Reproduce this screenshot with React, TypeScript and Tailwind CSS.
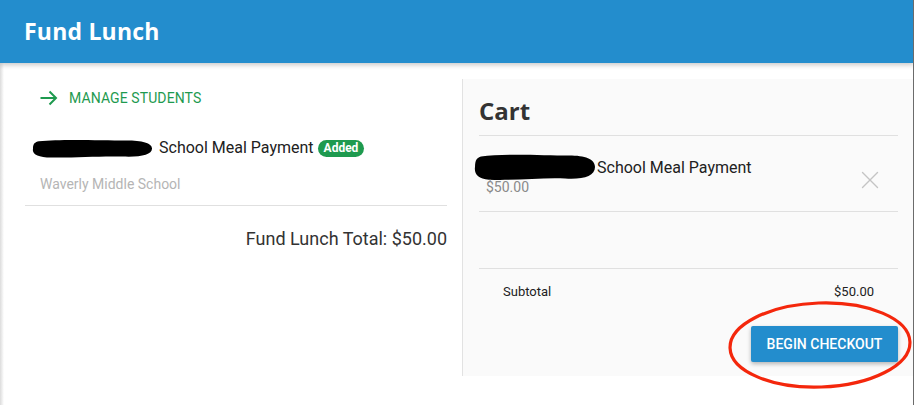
import { X } from 'lucide-react';

function Redaction({ className }: { className: string }) {
  return (
    <svg className={className} viewBox="0 0 124 26" preserveAspectRatio="none">
      <path d="M8 4 C30 1 70 3 96 3 C112 3 122 6 122 13 C122 21 110 24 92 23 C70 22 40 25 16 24 C5 23 1 19 2 13 C2 7 4 5 8 4 Z" fill="#000" />
    </svg>
  );
}

export default function App() {
  return (
    <div className="relative w-[914px] h-[405px] overflow-hidden bg-white font-['Roboto',sans-serif] text-[#212121]">
      <header className="relative z-10 h-[63px] bg-[#238dcd] px-6 flex items-center shadow-[0_2px_5px_rgba(0,0,0,0.22)]">
        <h1 className="text-white text-[23px] font-bold tracking-[0.2px] font-['Open_Sans',sans-serif] leading-none">Fund Lunch</h1>
      </header>

      <div className="absolute left-0 top-[63px] bottom-0 w-[4px] bg-gradient-to-r from-[#dcdcdc] to-transparent" />
      <div className="absolute right-0 top-0 bottom-0 w-[1px] bg-[#6b6b6b] z-20" />

      <div className="flex pt-[16px]">
        <section className="ml-[25px] w-[422px]">
          <a className="h-[38px] px-[15px] flex items-center gap-[11px] text-[14px] text-[#1e9a4f] uppercase tracking-[0.1px]">
            <svg className="w-[18px] h-[16px] shrink-0" viewBox="0 0 18 16" fill="none" stroke="currentColor" strokeWidth="2">
              <path d="M0.5 8h15.5M9.5 1.5l6.5 6.5-6.5 6.5" />
            </svg>
            Manage Students
          </a>

          <div className="pt-[19px] pb-[11px] border-b border-[#e0e0e0]">
            <div className="h-[24px] flex items-center pl-[6px]">
              <Redaction className="w-[123px] h-[21px] shrink-0" />
              <span className="ml-[5px] text-[16px]">School Meal Payment</span>
              <span className="ml-[4px] h-[17px] px-[6px] rounded-full bg-[#1e9a4f] text-white text-[12px] font-bold flex items-center leading-none">Added</span>
            </div>
            <div className="mt-[14px] h-[20px] px-[15px] flex items-center text-[14px] text-[#b5b5b5]">
              Waverly Middle School
            </div>
          </div>

          <div className="mt-[21px] text-right text-[18px] leading-[24px] text-[#333]">
            Fund Lunch Total: $50.00
          </div>
        </section>

        <aside className="ml-[15px] w-[452px] h-[297px] bg-[#fafafa] border-l border-[#e2e2e2] px-4 pt-[16px] pb-[14px] flex flex-col">
          <h2 className="text-[24px] leading-[32px] font-bold text-[#333] font-['Open_Sans',sans-serif] mb-[8px]">Cart</h2>

          <div className="border-t border-[#e0e0e0] pt-[20px] pb-[15px] flex items-end border-b">
            <div className="flex-1">
              <div className="h-[22px] flex items-center -ml-[6px]">
                <Redaction className="w-[124px] h-[30px] shrink-0" />
                <span className="text-[16px] mt-[2px]">School Meal Payment</span>
              </div>
              <div className="pl-[7px] h-[18px] flex items-center text-[14px] text-[#8a8a8a]">$50.00</div>
            </div>
            <X className="w-[30px] h-[30px] text-[#c4c4c4] mr-[13px] mb-[1px]" strokeWidth={1.1} />
          </div>

          <div className="h-[57px] border-b border-[#e0e0e0]" />

          <div className="mt-[14px] h-[18px] px-[24px] flex items-center justify-between text-[13px] text-[#212121]">
            <span>Subtotal</span>
            <span>$50.00</span>
          </div>

          <div className="mt-auto flex justify-end">
            <button className="w-[147px] h-[36px] rounded-[2px] bg-[#238dcd] text-white text-[14px] font-medium uppercase shadow-[0_2px_4px_rgba(0,0,0,0.28)]">
              Begin Checkout
            </button>
          </div>
        </aside>
      </div>

      <svg className="absolute left-[726px] top-[299px] w-[190px] h-[93px] pointer-events-none" viewBox="0 0 190 93">
        <ellipse cx="94" cy="46" rx="90" ry="42" fill="none" stroke="#f4270c" strokeWidth="3.2" transform="rotate(-2 94 46)" />
      </svg>
    </div>
  );
}
